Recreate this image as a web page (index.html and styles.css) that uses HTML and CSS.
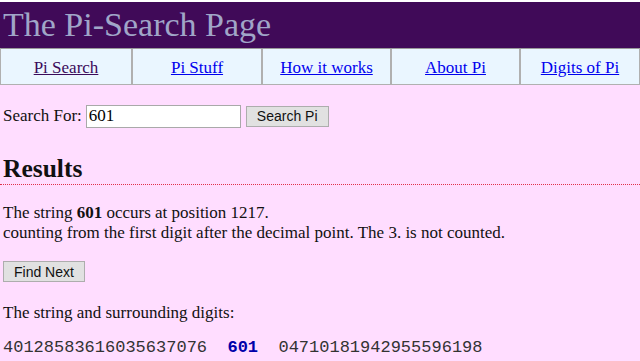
FILE: index.html
```html
<!DOCTYPE html>
<html>
<head>
<meta charset="utf-8">
<title>The Pi-Search Page</title>
<link rel="stylesheet" href="styles.css">
</head>
<body>
<header class="banner"><h1 class="title">The Pi-Search Page</h1></header>
<nav class="nav">
  <a class="nav-item visited" href="#">Pi Search</a>
  <a class="nav-item" href="#">Pi Stuff</a>
  <a class="nav-item" href="#">How it works</a>
  <a class="nav-item" href="#">About Pi</a>
  <a class="nav-item" href="#">Digits of Pi</a>
</nav>
<main class="content">
  <form class="search">
    <label class="search-label">Search For:</label>
    <input class="search-input" type="text" value="601">
    <button class="btn" type="button">Search Pi</button>
  </form>
  <h2 class="results">Results</h2>
  <p class="found">The string <b>601</b> occurs at position 1217.<br>counting from the first digit after the decimal point. The 3. is not counted.</p>
  <button class="btn find" type="button">Find Next</button>
  <p class="surround">The string and surrounding digits:</p>
  <div class="digits">40128583616035637076  <b class="hit">601</b>  04710181942955596198</div>
</main>
</body>
</html>
```
FILE: styles.css
```css
html, body {
  margin: 0;
  padding: 0;
}
body {
  background: #ffddff;
  font-family: "Liberation Serif", "Times New Roman", serif;
  font-size: 17px;
  color: #111;
  border-top: 2px solid #ffffff;
}
.banner {
  background: #400a58;
  height: 46px;
  display: flex;
  align-items: center;
  padding: 0 3px;
}
.title {
  margin: 0;
  font-weight: normal;
  font-size: 34px;
  color: #a0a6c8;
  line-height: 1;
}
.nav {
  display: grid;
  grid-template-columns: 130px 130px 129px 129px 1fr;
  background: #eaf6ff;
  border: 1px solid #b0b0b0;
  border-top: 1px solid #9a9a9a;
}
.nav-item {
  display: flex;
  align-items: center;
  justify-content: center;
  color: #0000ee;
  border-left: 2px solid #b0b0b0;
  padding-top: 3px;
  box-sizing: border-box;
  height: 35px;
}
.nav-item:first-child {
  border-left: 0;
}
.nav-item.visited {
  color: #3a0a5a;
}
.content {
  padding: 0 3px;
}
.search {
  display: flex;
  align-items: center;
  margin: 19px 0 0;
  height: 24px;
}
.search-label {
  margin-right: 4px;
}
.search-input {
  width: 149px;
  height: 19px;
  border: 1px solid #a9a9a9;
  padding: 1px 2px;
  font-family: "Liberation Serif", serif;
  font-size: 17px;
  margin: 0 5px 0 0;
  background: #fff;
}
.btn {
  font-family: "Liberation Sans", Arial, sans-serif;
  font-size: 14px;
  color: #111;
  background: #e1e1e1;
  border: 1px solid #adadad;
  padding: 0 9px;
  height: 21px;
  margin: 0;
}
.results {
  margin: 26px -3px 0;
  padding: 0 3px 1px;
  font-size: 25.5px;
  border-bottom: 1px dotted #e0304a;
  line-height: 29px;
}
.found {
  margin: 18px 0 0;
  line-height: 20px;
}
.find {
  margin-top: 18px;
  padding: 0 10px;
}
.search .btn {
  padding: 0 10px;
}
.surround {
  margin: 21px 0 0;
  line-height: 20px;
}
.digits {
  margin-top: 15px;
  font-family: "Liberation Mono", "Courier New", monospace;
  font-size: 17px;
  white-space: pre;
  color: #333;
}
.hit {
  color: #0000aa;
}
```
